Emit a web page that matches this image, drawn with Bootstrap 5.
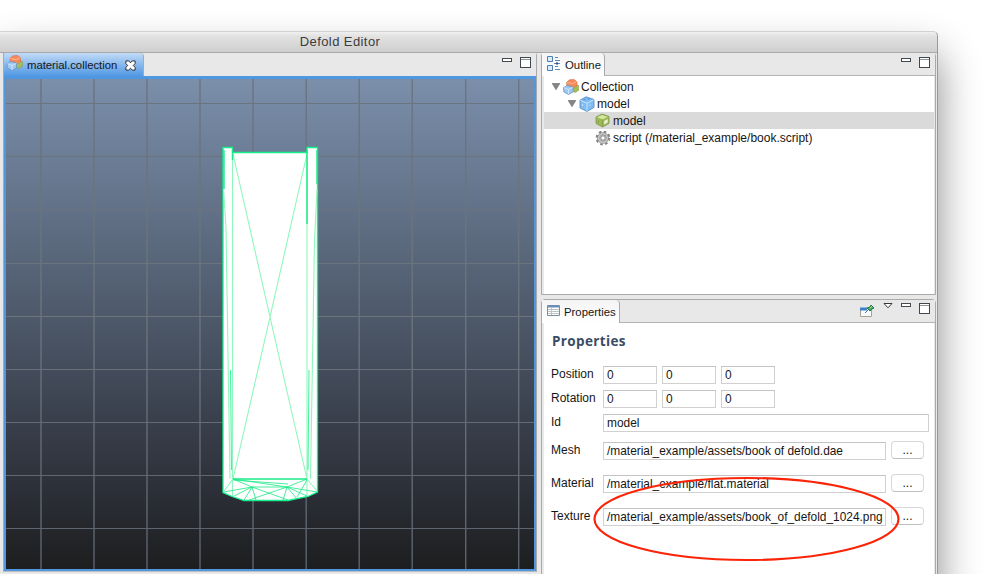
<!DOCTYPE html>
<html lang="en">
<head>
<meta charset="utf-8">
<title>Defold Editor</title>
<link href="https://cdn.jsdelivr.net/npm/bootstrap@5.3.0/dist/css/bootstrap.min.css" rel="stylesheet">
<style>
body{height:574px;background:#fff;font:12px/17px "Liberation Sans",Arial,sans-serif;color:#161616}
svg{display:block;flex:none}
.app-window{width:938px;height:640px;margin-top:31px;background:#e8e8e8;border-top:1px solid #d2d2d2;border-right:1px solid #999;border-top-right-radius:5px;box-shadow:0 24px 42px rgba(0,0,0,.46)}
.title-strip{height:21px;flex:none;background:linear-gradient(#f0f0f0,#e2e2e2 20%,#cfcfcf);border-bottom:1px solid #a5a5a5;border-top-right-radius:5px;font-size:13px;letter-spacing:.42px;padding:1px 257px 0 0;color:#3c3c3c;line-height:18px}
.workspace{padding:0 0 0 3px;gap:4px;margin-top:-1px}
.view-left{width:534px;height:520px;border:1px solid #a9a9a9;border-bottom-color:#bbb;border-top-right-radius:4px}
.view-right{width:395px;margin-right:1px}
.pane{border:1px solid #aaa;border-top-right-radius:4px;border-top-left-radius:4px;background:#e8e8e8}
.pane-outline{height:243px}
.pane-props{height:340px}
.tab-strip{height:23px;flex:none;background:#e8e8e8}
.pane .tab-strip{border-bottom:1px solid #b4b4b4}
.view-tab{border-right:1px solid #aaa;border-top-right-radius:4px;font-size:11.35px;background:linear-gradient(#f4f4f4,#fff);height:23px;padding:1px 4px 0 5px}
.view-tab.current{width:140px;background:linear-gradient(#c1dbf6,#8fbcee 45%,#5199e4);padding-left:2px;letter-spacing:-.03px}
.pane .view-tab{padding-right:3px}
.tools{gap:8px;padding:4px 5px 0 0}
.pane-props .tools{padding-top:3px}
.tools .low{margin-top:1px}
.scene{background:#4f97e0;padding:3px 2px 2px 2px;height:495px}
.pane-body{background:#fff;margin:0 1px 0 2px}
.tree-list{padding-top:2px}
.tree-item{height:17px;line-height:18px}
.tree-item.picked{background:#dadada}
.tree-item .kind{margin:0 2px 0 3px}
.lvl-0{padding-left:8px}.lvl-1{padding-left:24px}.lvl-2{padding-left:48px}
.tree-item.picked .kind{margin-right:3px}
.props-title{font:700 13.5px/19px "Open Sans","Noto Sans",sans-serif;color:#3a4c64;letter-spacing:.35px;margin:9px 0 15px 8px}
.prop{height:18px;padding-left:7px}
.prop-name{width:52px;line-height:16px}
.field{border:1px solid #d0d0d0;border-top-color:#c4c4c4;background:#fff;height:18px;line-height:17px;padding-left:3px;font-size:11.9px;white-space:nowrap}
.field-num{width:54px;margin-right:5px}
.field-path{width:283px;margin-right:5px}
.field-long{width:326px}
.more-btn{width:33px;height:18px;border:1px solid #d8d8d8;border-bottom-color:#c0c0c0;border-radius:4px;background:#fff;line-height:17px;margin-top:-1px}
.gap-s{margin-bottom:6px}.gap-m{margin-bottom:10px}.gap-l{margin-bottom:15px}
.callout-ring{left:49px;top:153px}
</style>
<script src="https://cdn.jsdelivr.net/npm/bootstrap@5.3.0/dist/js/bootstrap.bundle.min.js"></script>
</head>
<body class="overflow-hidden d-flex align-items-start">
<svg width="0" height="0" class="position-absolute">
<defs>
<symbol id="i-min" viewBox="0 0 10 4"><rect x=".5" y=".5" width="9" height="3" fill="#fff" stroke="#444a50"/></symbol>
<symbol id="i-max" viewBox="0 0 11 11"><rect x=".5" y=".5" width="10" height="10" fill="#fff" stroke="#3f4850"/><path d="M1 2.5h9" stroke="#8d959c"/></symbol>
<symbol id="i-arrow" viewBox="0 0 8 7"><path d="M0 .3h8L4 6.8z" fill="#858585" stroke="#666" stroke-width=".5"/></symbol>
<symbol id="i-collection" viewBox="0 0 16 16"><path d="M9.5 6.500l3-1 3.300 1v4.700l-3.600 2.300-3.500-1.500z" fill="#a3bd57" stroke="#7e9a3d" stroke-width=".5"/><path d="M3.500 3.300L6.500.8l4.500-.3 3 2.200v4L10 9 3.800 6.800z" fill="#f58a5c" stroke="#d96e41" stroke-width=".6"/><path d="M4 3.500l5.500 1.200 4-2" stroke="#ffc0a0" stroke-width=".8" fill="none"/><path d="M.5 8.500l4-2 5.500 1.500v5L5.500 15.500.8 13z" fill="#9fc8f1" stroke="#5b91c9" stroke-width=".7"/><path d="M1 8.700l4.500 1.800L10 8.300M5.500 10.500v4.600" stroke="#d9ecff" stroke-width=".8" fill="none"/></symbol>
<symbol id="i-cube" viewBox="0 0 16 16"><path d="M1 4.200L7 .8l8 2.700v8L8 15.400 1 12z" fill="#82bdf1" stroke="#4c86bf" stroke-width=".8"/><path d="M1.500 4.500L8 7.300l6.700-3.500M8 7.300v7.700" fill="none" stroke="#cbe5ff" stroke-width=".9"/><path d="M4.500 3.700h2M8.500 3h2" stroke="#4b89c8"/><path d="M3.500 8v2M11 8.500v1.500" stroke="#bfe0ff"/></symbol>
<symbol id="i-mesh" viewBox="0 0 15 15"><path d="M1 4l6-3 7 2.600v6.800L7.500 14 1 10.500z" fill="#9db953" stroke="#7d9847" stroke-width=".8"/><path d="M2 4.200l5-2.200 5.700 2L7.500 6.300z" fill="#d6e6a4"/><path d="M7.500 7v6.500" stroke="#7f9a48" stroke-width=".7"/><path d="M9 8l3.800-2v3.500L9 11.500z" fill="#e4efc5"/><path d="M3.500 7.700v2" stroke="#7f9b45"/></symbol>
<symbol id="i-gear" viewBox="0 0 16 16"><circle cx="8" cy="8" r="6.400" fill="none" stroke="#858585" stroke-width="2" stroke-dasharray="2.600 2.427"/><circle cx="8" cy="8" r="4.300" fill="#fff" stroke="#7c7c7c" stroke-width="3"/><circle cx="8" cy="8" r="4.300" fill="none" stroke="#c9c9c9" stroke-width="1.700"/><circle cx="8" cy="8" r="2.200" fill="#fff" stroke="#777" stroke-width=".9"/></symbol>
</defs>
</svg>
<div class="app-window d-flex flex-column flex-shrink-0">
<div class="title-strip text-center">Defold Editor</div>
<div class="workspace d-flex align-items-start">
<section class="view-left d-flex flex-column">
<div class="tab-strip d-flex justify-content-between">
<div class="view-tab current d-flex align-items-center">
<svg width="17" height="16" class="mb-1"><use href="#i-collection"/></svg><span class="ms-1">material.collection</span>
<svg width="11" height="11" viewBox="0 0 12 12" class="ms-2"><path d="M1 1h3l2 2 2-2h3v3L9 6l2 2v3H8L6 9l-2 2H1V8l2-2-2-2z" fill="#fff" stroke="#222"/></svg>
</div>
<div class="tools d-flex"><svg width="10" height="4" class="low"><use href="#i-min"/></svg><svg width="11" height="11"><use href="#i-max"/></svg></div>
</div>
<div class="scene">
<svg width="528" height="490" viewBox="6 79 528 490">
<defs>
<linearGradient id="sky" x1="0" y1="0" x2="0" y2="1"><stop offset="0" stop-color="#7b8fab"/><stop offset=".5" stop-color="#4c5768"/><stop offset=".85" stop-color="#2b2e36"/><stop offset="1" stop-color="#1d1e1f"/></linearGradient>
<linearGradient id="gridline" gradientUnits="userSpaceOnUse" x1="0" y1="79" x2="0" y2="569"><stop offset="0" stop-color="#6b747f"/><stop offset=".5" stop-color="#6b737b"/><stop offset="1" stop-color="#5b626d"/></linearGradient>
</defs>
<rect x="5" y="79" width="530" height="490" fill="url(#sky)"/>
<g fill="url(#gridline)">
<path d="M40.300 79h1.400v490h-1.400zM93.300 79h1.400v490h-1.400zM146.300 79h1.400v490h-1.400zM199.300 79h1.400v490h-1.400zM252.300 79h1.400v490h-1.400zM305.500 79h1.400v490h-1.400zM358.500 79h1.400v490h-1.400zM411.500 79h1.400v490h-1.400zM465 79h1.400v490h-1.400zM518 79h1.400v490h-1.400z"/>
<path d="M5 103h530v1H5zM5 156h530v1H5zM5 209h530v1H5zM5 263h530v1H5zM5 316h530v1H5zM5 369h530v1H5zM5 422h530v1H5zM5 475h530v1H5zM5 528h530v1H5z"/>
</g>
<path d="M223 147.500h9.500v5H307v-5h10.500V492L308 496.500l-20 4h-44l-12-4-9-4z" fill="#fff" stroke="#15ef8c" stroke-width="1.300"/>
<g fill="none" stroke="#8ff7bd" stroke-width="1.100">
<path d="M232.500 153v326M307 153v326M233 154l37 163 37 162M307 154l-37 163-37 162"/>
<path d="M223.500 188l2.500 40 4 251M317 190l-2.500 50-4 239M224 491l9-12M317 491l-10-12M232.500 480v16M307 480v16"/>
</g>
<g fill="none" stroke="#18ea87" stroke-width="1">
<path d="M224 150v39M317 150v34M307 150v74M232.500 150v10" stroke-width="1.400"/>
<path d="M230.500 370l1 100M309 370l-1 100" stroke-width=".8"/>
<path d="M233 479h74" stroke-width="1.600"/>
<path d="M224 492l28-5M287 487l30 5M233 479l19 8 35 0 20-8M233 479l54 8M252 487l-18 9M252 487l-8 13M252 487l4 13M252 487l36 13M287 487l-38 13M287 487l-4 13M287 487l10 12M287 487l20 9M307 480l-10 17M233 480l55 4" stroke-width=".8"/>
</g>
</svg>
</div>
</section>
<div class="view-right d-flex flex-column">
<section class="pane pane-outline d-flex flex-column">
<div class="tab-strip d-flex justify-content-between">
<div class="view-tab d-flex align-items-center">
<svg width="14" height="15" viewBox="0 0 14 15" class="mb-1"><g fill="#dcecfb" stroke="#4b7fb5"><path d="M.5.500h5v5h-5zM.5 9.500h5v5h-5z"/></g><path d="M8 1.500h3M8 4.500h5M7 7.500h6M8 10.500h3M8 13.500h5" stroke="#5f89b5"/><path d="M9 7.500h2" stroke="#234f82" stroke-width="2"/></svg>
<span class="ms-1">Outline</span></div>
<div class="tools d-flex"><svg width="10" height="4" class="low"><use href="#i-min"/></svg><svg width="11" height="11"><use href="#i-max"/></svg></div>
</div>
<div class="pane-body tree-list flex-grow-1">
<div class="tree-item lvl-0 d-flex align-items-center"><svg width="8" height="7"><use href="#i-arrow"/></svg><svg width="16" height="16" class="kind"><use href="#i-collection"/></svg><span>Collection</span></div>
<div class="tree-item lvl-1 d-flex align-items-center"><svg width="8" height="7"><use href="#i-arrow"/></svg><svg width="16" height="16" class="kind"><use href="#i-cube"/></svg><span>model</span></div>
<div class="tree-item lvl-2 picked d-flex align-items-center"><svg width="15" height="15" class="kind"><use href="#i-mesh"/></svg><span>model</span></div>
<div class="tree-item lvl-2 d-flex align-items-center"><svg width="16" height="16" class="kind"><use href="#i-gear"/></svg><span>script (/material_example/book.script)</span></div>
</div>
</section>
<section class="pane pane-props d-flex flex-column mt-1">
<div class="tab-strip d-flex justify-content-between">
<div class="view-tab d-flex align-items-center">
<svg width="13" height="11" viewBox="0 0 13 11" class="mb-1"><path d="M.5.500h12v10H.5z" fill="#fff" stroke="#7b8d9f"/><path d="M1 1.500h11" stroke="#688eb8" stroke-width="2"/><path d="M4.500 2v8M1 4.500h11M1 6.500h11M1 8.500h11" stroke="#bdc5c9"/></svg>
<span class="ms-1">Properties</span></div>
<div class="tools d-flex">
<svg width="15" height="14" viewBox="0 0 15 14" class="low"><path d="M.5 4.500h11v8H.5z" fill="#f7fbff" stroke="#aaa18f"/><path d="M0 5h7" stroke="#3f80ca" stroke-width="3"/><path d="M5 9l3-3" stroke="#5b7382"/><path d="M7 4l3 3 2-2 2-1-3-3-1 2z" fill="#43b16b" stroke="#217849"/><path d="M10 4l2-2" stroke="#e4cb4d"/></svg>
<svg width="10" height="6" viewBox="0 0 10 6"><path d="M1 .500h8L5 4.800z" fill="#fff" stroke="#35393d"/></svg>
<svg width="10" height="4"><use href="#i-min"/></svg><svg width="11" height="11"><use href="#i-max"/></svg></div>
</div>
<div class="pane-body flex-grow-1 position-relative">
<div class="d-flex"><div class="props-title">Properties</div></div>
<div class="prop d-flex gap-s"><div class="prop-name">Position</div><div class="field field-num">0</div><div class="field field-num">0</div><div class="field field-num">0</div></div>
<div class="prop d-flex gap-s"><div class="prop-name">Rotation</div><div class="field field-num">0</div><div class="field field-num">0</div><div class="field field-num">0</div></div>
<div class="prop d-flex gap-m"><div class="prop-name">Id</div><div class="field field-long">model</div></div>
<div class="prop d-flex gap-l"><div class="prop-name">Mesh</div><div class="field field-path">/material_example/assets/book of defold.dae</div><div class="more-btn text-center">...</div></div>
<div class="prop d-flex gap-l"><div class="prop-name">Material</div><div class="field field-path">/material_example/flat.material</div><div class="more-btn text-center">...</div></div>
<div class="prop d-flex"><div class="prop-name">Texture</div><div class="field field-path">/material_example/assets/book_of_defold_1024.png</div><div class="more-btn text-center">...</div></div>
<svg class="callout-ring position-absolute" width="308" height="86" viewBox="0 0 308 86"><ellipse cx="153.500" cy="43" rx="152" ry="41" fill="none" stroke="#fb2408" stroke-width="2.200"/></svg>
</div>
</section>
</div>
</div>
</div>
</body>
</html>
